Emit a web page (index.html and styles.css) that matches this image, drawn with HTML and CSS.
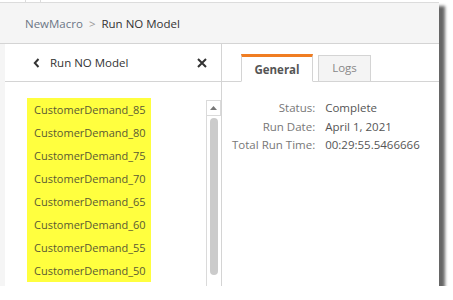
FILE: index.html
```html
<!DOCTYPE html>
<html lang="en">
<head>
    <meta charset="UTF-8">
    <title>Run NO Model</title>
    <link rel="stylesheet" href="styles.css">
</head>
<body>
<div class="window">
    <!--上方标签残边-->
    <div class="topstrip">
        <span class="cell first"></span>
        <span class="cell"></span>
    </div>
    <!--面包屑-->
    <div class="crumbs">
        <span class="crumb-link">NewMacro</span>
        <span class="crumb-sep">&gt;</span>
        <span class="crumb-cur">Run NO Model</span>
    </div>
    <div class="main">
        <div class="edge"></div>
        <div class="left">
            <div class="left-head">
                <span class="back">
                    <svg width="7" height="10" viewBox="0 0 7 10"><path d="M5.5 1 L1.8 5 L5.5 9" fill="none" stroke="#333" stroke-width="2"/></svg>
                </span>
                <span class="left-title">Run NO Model</span>
                <span class="close">
                    <svg width="10" height="10" viewBox="0 0 10 10"><path d="M1 1 L9 9 M9 1 L1 9" stroke="#333" stroke-width="2"/></svg>
                </span>
            </div>
            <div class="left-body">
                <ul class="scenarios">
                    <li>CustomerDemand_85</li>
                    <li>CustomerDemand_80</li>
                    <li>CustomerDemand_75</li>
                    <li>CustomerDemand_70</li>
                    <li>CustomerDemand_65</li>
                    <li>CustomerDemand_60</li>
                    <li>CustomerDemand_55</li>
                    <li>CustomerDemand_50</li>
                </ul>
                <div class="scrollbar">
                    <div class="scroll-up">
                        <svg width="7" height="4" viewBox="0 0 7 4"><path d="M0 4 L3.5 0 L7 4 Z" fill="#777"/></svg>
                    </div>
                    <div class="thumb"></div>
                </div>
            </div>
        </div>
        <div class="right">
            <div class="tabs">
                <span class="tab active">General</span>
                <span class="tab">Logs</span>
            </div>
            <div class="details">
                <span class="label">Status:</span>
                <span class="value">Complete</span>
                <span class="label">Run Date:</span>
                <span class="value">April 1, 2021</span>
                <span class="label">Total Run Time:</span>
                <span class="value">00:29:55.5466666</span>
            </div>
        </div>
    </div>
</div>
</body>
</html>
```

FILE: styles.css
```css
* {
    padding: 0;
    margin: 0;
    list-style: none;
    box-sizing: border-box;
}

body {
    background: #fff;
    font-family: "Open Sans", "Noto Sans", sans-serif;
    font-size: 11px;
    color: #333;
}

.window {
    width: 439px;
    height: 286px;
    background: #fff;
    box-shadow: 6px 6px 3px rgba(0, 0, 0, 0.6);
    display: flex;
    flex-direction: column;
    overflow: hidden;
}

.topstrip {
    height: 3px;
    border-bottom: 1px solid #dcdcdc;
    display: flex;
    padding-left: 25px;
}

.topstrip .cell {
    width: 15px;
    border-left: 1px solid #dcdcdc;
}

.crumbs {
    height: 41px;
    background: #f5f5f5;
    border-bottom: 1px solid #d4d4d4;
    display: flex;
    align-items: center;
    padding-left: 25px;
    font-size: 11.5px;
}

.crumb-link {
    color: #6b7585;
}

.crumb-sep {
    color: #999;
    margin: 0 6px 0 6px;
}

.crumb-cur {
    color: #333;
}

.main {
    flex: 1;
    display: flex;
    min-height: 0;
}

.edge {
    width: 5px;
    background: #f5f5f5;
}

.left {
    width: 217px;
    border-right: 1px solid #d4d4d4;
    display: flex;
    flex-direction: column;
}

.left-head {
    height: 38px;
    border-bottom: 1px solid #d4d4d4;
    display: flex;
    align-items: center;
    padding-left: 28px;
    font-size: 11.5px;
}

.back {
    display: flex;
    width: 17px;
}

.left-title {
    color: #333;
    flex: 1;
}

.close {
    display: flex;
    margin-right: 14px;
}

.left-body {
    flex: 1;
    display: flex;
    min-height: 0;
}

.scenarios {
    margin: 16px 0 0 22px;
    width: 124px;
    height: 184px;
    background: #ffff3f;
    flex: none;
}

.scenarios li {
    height: 23px;
    line-height: 23px;
    padding-left: 7px;
    color: #5a5a34;
}

.scrollbar {
    margin: 18px 0 0 55px;
    width: 15px;
    border-left: 1px solid #dadada;
    display: flex;
    flex-direction: column;
    align-items: center;
}

.scroll-up {
    width: 15px;
    height: 16px;
    margin-left: -1px;
    border: 1px solid #dadada;
    display: flex;
    align-items: center;
    justify-content: center;
    padding-bottom: 1px;
}

.thumb {
    width: 8px;
    height: 157px;
    margin-top: 2px;
    background: #cbcbcb;
    border-radius: 4px;
}

.right {
    flex: 1;
    display: flex;
    flex-direction: column;
}

.tabs {
    height: 38px;
    border-bottom: 1px solid #d4d4d4;
    display: flex;
    align-items: flex-end;
    padding-left: 19px;
    gap: 5px;
}

.tab {
    height: 27px;
    width: 53px;
    margin-bottom: -1px;
    border: 1px solid #d4d4d4;
    background: #f4f4f4;
    color: #888;
    display: flex;
    align-items: center;
    justify-content: center;
    padding-bottom: 2px;
    font-size: 11.5px;
}

.tab.active {
    width: 72px;
    height: 28px;
    background: #fff;
    border-top: 3px solid #f07d22;
    border-bottom-color: #fff;
    color: #555;
    font-weight: bold;
    padding-bottom: 0;
}

.details {
    display: grid;
    grid-template-columns: auto auto;
    justify-content: start;
    column-gap: 10px;
    padding: 17px 0 0 10px;
    line-height: 18.5px;
    font-size: 11.5px;
}

.label {
    text-align: right;
    color: #777;
}

.value {
    color: #555;
}
```
